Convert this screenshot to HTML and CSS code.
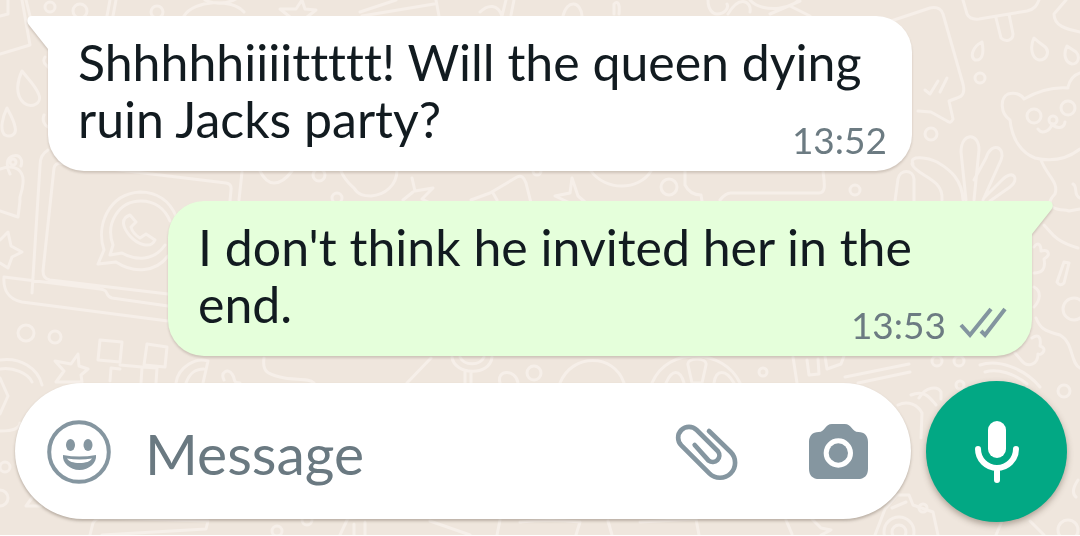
FILE: index.html
```html
<!DOCTYPE html>
<html lang="en">
<head>
<meta charset="utf-8">
<meta name="viewport" content="width=device-width, initial-scale=1">
<title>Chat</title>
<link rel="stylesheet" href="styles.css">
</head>
<body>
<main class="chat">
  <svg class="wallpaper" viewBox="0 0 1080 535" preserveAspectRatio="xMidYMid slice" aria-hidden="true">
    <!-- top edge -->
    <path d="M22 0l8 45L0 54M26 0l5 20M0 16l8-2V0"/>
    <circle cx="50" cy="7" r="5"/><circle cx="80" cy="11" r="7"/><circle cx="157" cy="12" r="6"/>
    <path d="M110 0l-3 16M116 0l-3 16M184 16c10-16 48-18 60-4M205 0c10 5 24 4 34-3"/>
    <path d="M302 0l-6 9-16 0 10 8M302 0l3 9 11 1-9 7M360 12l36-12M362 16l72-12M436 0l3 16"/>
    <path d="M480 12c8-8 18-8 22 4M506 0l-4 16M514 0l-3 15M563 16c4-17 18-15 19 0M614 14V4c4-4 6 0 5 10M708 0c0 10 5 14 9 14 8 0 12-6 10-10M728 14c12-20 24-12 22-2M750 0c12 14 48 10 52-6M790 6l20 10M770 14l30-13"/>
    <!-- left side -->
    <path d="M22 71c-4 8-8 24 2 32 8 6 18 0 15-8-3-9-11-16-17-24zM7 108c-4 8-8 22-2 27 6 3 12-1 10-8-1-7-5-13-8-19z"/>
    <path d="M45 57c-4 6 2 8 3 10M44 115c-2 5 0 10 4 12M10 174c-4-8-4-16 3-18s10 4 8 10M0 169c16-6 24 2 23 14-1 12-4 12-3 18l-2 16-18-6"/>
    <circle cx="13" cy="162" r="3"/>
    <path d="M0 240l8-8 3 14 11 6-10 5-4 11-8-5"/>
    <!-- laptop -->
    <path d="M48 150c-6 4-8 8-8 16l-8 127M54 168l-11 103q0 8 7 9l118 14M54 168q1-5 7-5l165 20q6 1 5 7l-1 11M242 172l-3 28M168 306l-56-8c-8-2-2-8-12-9l-96-12c-1 12 4 22 18 25l146 19"/>
    <path d="M98 264l6-14c-8-24 4-56 36-58 18 0 30 10 36 24M98 264l18-2c18 12 40 10 52-6M110 255l3-10c-8-22 6-44 28-44 14 0 24 8 29 20M110 255l12-2c14 8 32 8 43-8M130 215c-11 4-6 14 0 21 8 9 21 13 25 4l-9-6-6 4c-5-3-8-7-9-11l5-5z"/>
    <circle cx="26" cy="333" r="8"/><circle cx="55" cy="337" r="6"/>
    <path d="M100 340l22 2-2 20-22-2zM147 344l20 3-2 20-21-2zM120 365l22 2-1 16M110 381l1-13 9 1M142 367l15 1-1 15M78 354l-7 10-16-3 9 10-8 11h26l-1-7 7-6-9-3zM0 360c20-3 38 8 42 25M0 369c13-2 28 4 32 13M0 431c15 0 20-4 20-8M0 378l8 18-8 18"/>
    <path d="M176 383c2-16 20-26 32-22l-5 22M186 383c4-11 10-14 18-14M264 358c-2 14 4 16 16 19 14 4 28 0 34 6M224 380c-4-8 4-12 8-6 4 5 0 9 8 9"/>
    <!-- strip between the bubbles -->
    <path d="M260 171c4 8 9 12 14 12s12-4 18-12M341 171c4 10 10 14 13 17 4 7 10 8 17 8 14-1 26-11 26-26M412 178l3 13 18-3-11 11 10 5M413 192l-10 8M471 200l19-7 27-16q6-3 9 6l5 20M493 193l4 7M572 178l-2 15-15 3 15 7 15-1-7-6zM591 171c14 20 48 20 60 0M685 171v14c4 8 10 10 16 10l1 6M720 200q6-8 12-7h87c8 0 5-12 4-22"/>
    <circle cx="319" cy="175" r="6"/><circle cx="337" cy="198" r="5"/><circle cx="537" cy="171" r="4"/><circle cx="669" cy="187" r="8"/><circle cx="855" cy="190" r="5"/>
    <!-- upper right -->
    <path d="M885 23l45-15q10-2 13 6l20 70q3 12-6 14l-8 3 4 18q-2 5-6 2l-16-9-13-1M925 90l5 4 8-13M940 92l7-14"/>
    <path d="M963 0l4 14q3 6 12 5l48-8c8-2 10-6 12-11M996 18l5 20c5 5 12 2 12-4l-4-20M982 42c-10 5-12 15-7 18 8 1 9-8 7-18zM1034 38c-4 8-3 20 5 22 9 0 11-10 5-14-4-3-7-5-10-8zM1067 46c-4 8-2 16 5 18 7 0 8-8 4-12zM1066 0l-12 14c0 12 12 15 26 18"/>
    <circle cx="980" cy="78" r="5"/><circle cx="931" cy="134" r="6"/>
    <path d="M1010 120c-10-7-10-22-2-26 8-2 14 1 16 5 14-8 30-12 44-11M1068 87c2-8 6-12 12-14M1010 120c2 20 12 33 25 38 16 4 32 1 45-9M1041 160c6 16 18 22 14 34-5 5-9 12 2 15 7 2 7 0 12 2l11-2M1073 184c5 2 0 12 7 14M1038 129c4 6 12 2 14-5 4 5 12 5 13-2"/>
    <circle cx="1034" cy="116" r="7"/><circle cx="1068" cy="108" r="7"/><circle cx="1053" cy="120" r="4"/>
    <path d="M895 201l3-22c2-10 15-10 16 0v22M913 164c-5-10 16-6 24-2 14 8 25 18 26 38M912 164c4 12 32 14 30 36M966 200l-5-48c0-20 18-20 18-2l-5 50M974 180l12-22c6-18 20-10 15 2l-18 40M984 198l18-18c12-12 18 0 8 7l-20 14"/>
    <!-- lower right -->
    <path d="M1044 225c8 8 10 16 34 23M1034 247c4-6 7-2 7 4 8-2 10 4 3 8 2 10-2 14-10 14M1064 262l5 1-5 20q-4 4-7-1zM1034 287c8 4 6 14 0 20M1036 318c4 10 8 13 24 17 14 8 10 28 20 33M1032 338c8-6 9 2 8 8 8 2 2 10-2 8 0 10-10 15-17 6l-6-7"/>
    <circle cx="1074" cy="309" r="11"/><circle cx="937" cy="361" r="5"/><circle cx="959" cy="361" r="5"/>
    <path d="M793 357l4 26M807 360l2 15 10-1-1-15M825 356l2 13 14-5 3-8M845 377l64-13M858 383l52-11M980 365c18-6 44 3 60 22M985 372c13-4 30 2 42 12M898 405c10-5 20 0 24 8l-1 25M911 395c14-6 20 4 25 10M919 398c7-12 19-12 22-6v7M1078 480q-8 12-2 17"/>
    <circle cx="1064" cy="391" r="6"/><circle cx="960" cy="385" r="4"/>
    <!-- lower middle -->
    <path d="M407 383l24-25M452 357c2 18 38 20 40 0M460 357c4 9 20 9 24 0M465 372v11M471 372v11M500 383c-4-14 16-14 18 0M560 383c12-30 54-30 64 0M652 383c16-38 72-34 88 0M666 383c6-14 14-14 18 0M688 365c-2-8 20-8 18 0l-4 18h-10zM714 383c2-14 12-14 20 0"/>
    <circle cx="534" cy="373" r="7"/><circle cx="763" cy="372" r="4"/>
    <!-- bottom edge -->
    <path d="M34 495l-8 11h15M90 535l3-12q3-5 9-5l106 3-2 8-104 6M340 535l8-17 38-2M354 524v11M365 522v13M430 521l40 14M500 520l-3 15M520 522q30-3 60 0l-4 13M608 521l4 14M640 522l56-3 3 16M786 520l6 14M812 519l9 9 10 2-10 5M875 535l10-26 12-14 12 0 4 10 20 7 5 23M892 508l14-6M1002 521l-6 14M1030 521l14 14"/>
    <circle cx="5" cy="467" r="5"/><circle cx="0" cy="498" r="8"/><circle cx="277" cy="531" r="5"/><circle cx="307" cy="520" r="5"/><circle cx="899" cy="532" r="15"/><circle cx="899" cy="532" r="7"/><circle cx="923" cy="508" r="4"/><circle cx="1068" cy="530" r="10"/>
  </svg>

  <section class="messages" aria-label="Messages">
    <article class="bubble incoming">
      <svg class="tail" viewBox="0 0 22 36" aria-hidden="true"><path d="M22 0H5C0 0-1 5 2 9L21 33l1 3z"/></svg>
      <p class="text">Shhhhhiiiittttt! Will the queen dying ruin Jacks party?</p>
      <div class="meta"><time datetime="13:52">13:52</time></div>
    </article>
    <article class="bubble outgoing">
      <svg class="tail" viewBox="0 0 22 36" aria-hidden="true"><path d="M0 0H17c5 0 6 5 3 9L1 33l-1 3z"/></svg>
      <p class="text">I don't think he invited her in the end.</p>
      <div class="meta">
        <time datetime="13:53">13:53</time>
        <svg class="ticks" viewBox="0 0 48 32" role="img" aria-label="Delivered"><path d="M2 18l9 10L32 2M22 24l4 4L46 2"/></svg>
      </div>
    </article>
  </section>

  <form class="composer">
    <div class="field">
      <button class="icon-button" type="button" aria-label="Emoji">
        <svg class="emoji" viewBox="0 0 64 64" aria-hidden="true">
          <circle class="ring" cx="32" cy="32" r="29.8"/>
          <ellipse cx="23.500" cy="25" rx="4.500" ry="6"/><ellipse cx="41" cy="25" rx="4.500" ry="6"/>
          <path fill-rule="evenodd" d="M16 35q16 3 33 0c1 8-7 15-16.500 15S15 43 16 35zM20 38.500c2 3 6 4.500 12.500 4.500S43 41.500 45 38.500q-12.500 2-25 0z"/>
        </svg>
      </button>
      <input class="message-input" type="text" placeholder="Message" aria-label="Message">
      <button class="icon-button" type="button" aria-label="Attach">
        <svg class="clip" viewBox="105 156 192 174" aria-hidden="true"><path d="M207 180l65 63a45 45 0 0 1-64 64l-84-84a32 32 0 0 1 46-46l64 64a20 20 0 0 1-28 28l-42-47"/></svg>
      </button>
      <button class="icon-button" type="button" aria-label="Camera">
        <svg class="camera" viewBox="0 0 177 165" aria-hidden="true"><path fill-rule="evenodd" d="M69 0h38c21 0 22 24 41 24 19 0 29 12 29 30v80c0 20-11 31-31 31H31c-20 0-31-11-31-31V54c0-18 10-30 29-30C48 24 48 0 69 0zM88 43a44 44 0 1 0 0 88 44 44 0 1 0 0-88z"/><circle cx="88" cy="87" r="29"/></svg>
      </button>
    </div>
    <button class="mic-button" type="button" aria-label="Record voice message">
      <svg class="mic" viewBox="0 0 44 62" aria-hidden="true"><rect x="13" y="0" width="18" height="37" rx="9"/><path d="M3 28a19 19 0 0 0 38 0M22 47v12"/></svg>
    </button>
  </form>
</main>
</body>
</html>
```
FILE: styles.css
```css
* {
  box-sizing: border-box;
}

body {
  margin: 0;
  background: #fff;
  font-family: Lato, "Noto Sans", sans-serif;
  font-variant-ligatures: none;
}

button {
  margin: 0;
  padding: 0;
  border: 0;
  background: none;
  cursor: pointer;
}

svg {
  display: block;
}

.chat {
  position: relative;
  display: flex;
  flex-direction: column;
  gap: 25px;
  min-height: calc(100vh - 1px);
  padding: 16px 0 13px;
  overflow: hidden;
  background: #efe6dd;
}

.wallpaper {
  position: absolute;
  inset: 0;
  width: 100%;
  height: 100%;
  fill: none;
  stroke: #f6efe9;
  stroke-width: 3;
  stroke-linecap: round;
  stroke-linejoin: round;
}

.messages {
  position: relative;
  display: flex;
  flex-direction: column;
  gap: 30px;
  padding: 0 48px;
}

.bubble {
  position: relative;
  display: grid;
  width: calc(100% - 120px);
  padding: 18px 25px 23px 30px;
  border-radius: 36px;
  filter: drop-shadow(0 2px 1px rgba(90, 75, 60, 0.22));
}

.incoming {
  align-self: flex-start;
  border-top-left-radius: 0;
  background: #fff;
  fill: #fff;
}

.outgoing {
  align-self: flex-end;
  border-top-right-radius: 0;
  background: #e5ffdb;
  fill: #e5ffdb;
}

.tail {
  position: absolute;
  top: 0;
  width: 22px;
  height: 36px;
}

.incoming .tail {
  right: calc(100% - 1px);
}

.outgoing .tail {
  left: calc(100% - 1px);
}

.text,
.meta {
  grid-area: 1 / 1;
}

.text {
  margin: 0;
  color: #121b20;
  font-size: 50px;
  line-height: 57px;
}

.meta {
  display: flex;
  align-items: center;
  align-self: end;
  justify-self: end;
  gap: 13px;
  margin-bottom: -14px;
  color: #6c7b82;
  font-size: 37px;
  line-height: 44px;
}

.ticks {
  width: 48px;
  height: 32px;
  margin-bottom: 4px;
  fill: none;
  stroke: #83959f;
  stroke-width: 4;
}

.composer {
  position: relative;
  display: flex;
  align-items: center;
  gap: 15px;
  margin-top: auto;
  padding: 0 13px 0 15px;
}

.field {
  display: flex;
  flex: 1;
  align-items: center;
  min-width: 0;
  height: 136px;
  margin-bottom: 2px;
  padding: 2px 43px 0 32px;
  border-radius: 68px;
  background: #fff;
  box-shadow: 0 2px 3px rgba(90, 75, 60, 0.35);
}

.icon-button {
  flex: none;
  fill: #8596a0;
}

.message-input {
  flex: 1;
  min-width: 0;
  margin: 0 0 0 34px;
  padding: 2px 0 0;
  border: 0;
  outline: 0;
  background: none;
  color: #121b20;
  font-family: inherit;
  font-size: 57px;
  line-height: 70px;
}

.message-input::placeholder {
  color: #6a7981;
  opacity: 1;
}

.emoji {
  width: 64px;
  height: 64px;
}

.ring {
  fill: none;
  stroke: #8596a0;
  stroke-width: 4;
}

.clip {
  width: 64px;
  height: 58px;
  fill: none;
  stroke: #8596a0;
  stroke-width: 14;
  stroke-linecap: round;
}

.camera {
  width: 59px;
  height: 55px;
  margin-left: 70px;
}

.mic-button {
  display: grid;
  flex: none;
  place-items: center;
  width: 141px;
  height: 141px;
  border-radius: 50%;
  background: #02a884;
  box-shadow: 0 3px 6px rgba(90, 75, 60, 0.45);
}

.mic {
  width: 44px;
  height: 62px;
  fill: #fff;
}

.mic path {
  fill: none;
  stroke: #fff;
  stroke-width: 6;
  stroke-linecap: round;
}
```
